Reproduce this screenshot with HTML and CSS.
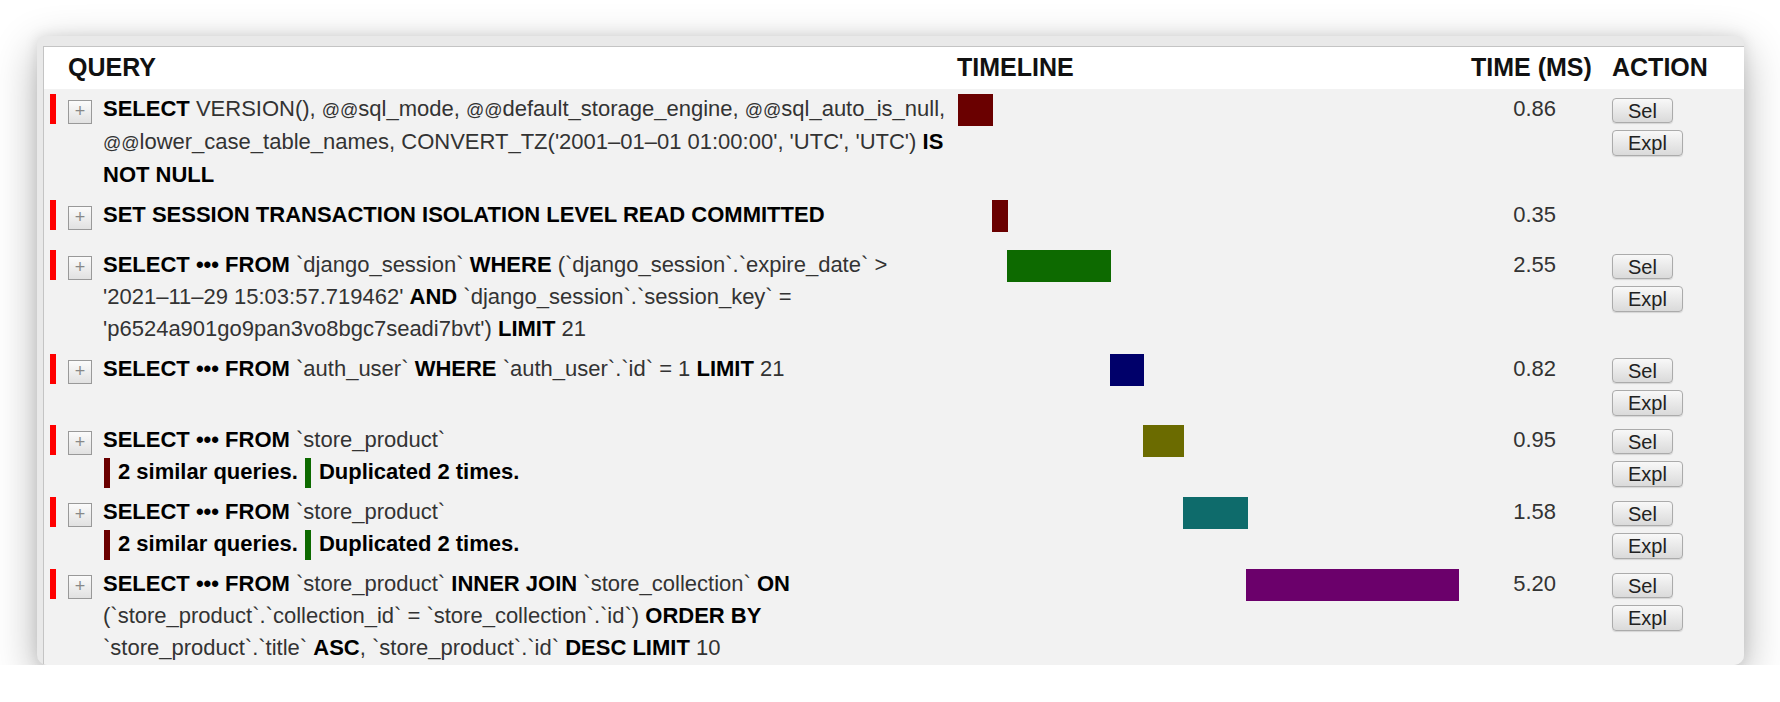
FILE: index.html
```html
<!DOCTYPE html>
<html lang="en">
<head>
<meta charset="utf-8">
<title>SQL queries</title>
<link rel="stylesheet" href="styles.css">
</head>
<body>
<div class="window">
  <div class="panel">
    <div class="row head">
      <div class="cell"></div>
      <div class="cell h-query">QUERY</div>
      <div class="cell h-timeline">TIMELINE</div>
      <div class="cell h-time">TIME (MS)</div>
      <div class="cell h-action">ACTION</div>
    </div>

    <div class="row">
      <div class="cell mark"><span class="marker"></span></div>
      <div class="cell toggle"><span class="toggle-box">+</span></div>
      <div class="cell query"><strong>SELECT</strong> VERSION(), <span class="at">@@</span>sql_mode, <span class="at">@@</span>default_storage_engine, <span class="at">@@</span>sql_auto_is_null, <span class="at">@@</span>lower_case_table_names, CONVERT_TZ(<span class="nowrap">'2001–01–01 01:00:00'</span>, 'UTC', 'UTC') <strong>IS NOT NULL</strong></div>
      <div class="cell timeline"><div class="track"><span class="bar c-red" style="left:0%;width:6.99%"></span></div></div>
      <div class="cell time">0.86</div>
      <div class="cell action"><button class="btn">Sel</button><button class="btn">Expl</button></div>
    </div>

    <div class="row">
      <div class="cell mark"><span class="marker"></span></div>
      <div class="cell toggle"><span class="toggle-box">+</span></div>
      <div class="cell query"><strong>SET SESSION TRANSACTION ISOLATION LEVEL READ COMMITTED</strong></div>
      <div class="cell timeline"><div class="track"><span class="bar c-red" style="left:6.79%;width:3.19%"></span></div></div>
      <div class="cell time">0.35</div>
      <div class="cell action action-empty"></div>
    </div>

    <div class="row">
      <div class="cell mark"><span class="marker"></span></div>
      <div class="cell toggle"><span class="toggle-box">+</span></div>
      <div class="cell query"><strong>SELECT ••• FROM</strong> `django_session` <strong>WHERE</strong> (`django_session`.`expire_date` &gt; <span class="nowrap">'2021–11–29 15:03:57.719462'</span> <strong>AND</strong> `django_session`.`session_key` = 'p6524a901go9pan3vo8bgc7seadi7bvt') <strong>LIMIT</strong> 21</div>
      <div class="cell timeline"><div class="track"><span class="bar c-green" style="left:9.78%;width:20.76%"></span></div></div>
      <div class="cell time">2.55</div>
      <div class="cell action"><button class="btn">Sel</button><button class="btn">Expl</button></div>
    </div>

    <div class="row">
      <div class="cell mark"><span class="marker"></span></div>
      <div class="cell toggle"><span class="toggle-box">+</span></div>
      <div class="cell query"><strong>SELECT ••• FROM</strong> `auth_user` <strong>WHERE</strong> `auth_user`.`id` = 1 <strong>LIMIT</strong> 21</div>
      <div class="cell timeline"><div class="track"><span class="bar c-navy" style="left:30.34%;width:6.79%"></span></div></div>
      <div class="cell time">0.82</div>
      <div class="cell action"><button class="btn">Sel</button><button class="btn">Expl</button></div>
    </div>

    <div class="row">
      <div class="cell mark"><span class="marker"></span></div>
      <div class="cell toggle"><span class="toggle-box">+</span></div>
      <div class="cell query"><strong>SELECT ••• FROM</strong> `store_product`
        <div class="dup"><span class="swatch c-red"></span>2 similar queries. <span class="swatch c-green"></span>Duplicated 2 times.</div>
      </div>
      <div class="cell timeline"><div class="track"><span class="bar c-olive" style="left:36.93%;width:8.18%"></span></div></div>
      <div class="cell time">0.95</div>
      <div class="cell action"><button class="btn">Sel</button><button class="btn">Expl</button></div>
    </div>

    <div class="row">
      <div class="cell mark"><span class="marker"></span></div>
      <div class="cell toggle"><span class="toggle-box">+</span></div>
      <div class="cell query"><strong>SELECT ••• FROM</strong> `store_product`
        <div class="dup"><span class="swatch c-red"></span>2 similar queries. <span class="swatch c-green"></span>Duplicated 2 times.</div>
      </div>
      <div class="cell timeline"><div class="track"><span class="bar c-teal" style="left:44.91%;width:12.97%"></span></div></div>
      <div class="cell time">1.58</div>
      <div class="cell action"><button class="btn">Sel</button><button class="btn">Expl</button></div>
    </div>

    <div class="row">
      <div class="cell mark"><span class="marker"></span></div>
      <div class="cell toggle"><span class="toggle-box">+</span></div>
      <div class="cell query"><strong>SELECT ••• FROM</strong> `store_product` <strong>INNER JOIN</strong> `store_collection` <strong>ON</strong> (`store_product`.`collection_id` = `store_collection`.`id`) <strong>ORDER BY</strong> `store_product`.`title` <strong>ASC</strong>, `store_product`.`id` <strong>DESC LIMIT</strong> 10</div>
      <div class="cell timeline"><div class="track"><span class="bar c-purple" style="left:57.49%;width:42.51%"></span></div></div>
      <div class="cell time">5.20</div>
      <div class="cell action"><button class="btn">Sel</button><button class="btn">Expl</button></div>
    </div>
  </div>
</div>
</body>
</html>
```

FILE: styles.css
```css
html, body {
  margin: 0;
  padding: 0;
  background: #ffffff;
}

body {
  font-family: "Liberation Sans", Arial, Helvetica, sans-serif;
  color: #333333;
  overflow: hidden;
}

.window {
  box-sizing: border-box;
  margin: 36px 0 0 37px;
  width: 1707px;
  height: 629px;
  padding: 10px 0 0 6px;
  background: #e9e9e9;
  border-radius: 7px 7px 10px 10px;
  box-shadow: 0 14px 44px rgba(0, 0, 0, 0.3), 0 0 14px rgba(0, 0, 0, 0.1);
  overflow: hidden;
}

.panel {
  box-sizing: border-box;
  height: 100%;
  background: #f2f2f2;
  border-top: 1px solid #c4c4c4;
  border-left: 1px solid #c4c4c4;
  overflow: hidden;
}

.row {
  display: grid;
  grid-template-columns: 20px 35px 854px 514px 141px 136px;
  align-items: start;
  padding: 4px 0;
  font-size: 22px;
  line-height: 32px;
}

.row.head {
  background: #ffffff;
  padding: 0;
  height: 42px;
  align-items: center;
  font-size: 25px;
  font-weight: bold;
  line-height: 40px;
  color: #111111;
}

.cell {
  box-sizing: border-box;
  min-width: 0;
}

.h-query {
  grid-column: 2 / 4;
  padding-left: 4px;
  padding-bottom: 2px;
}

.h-timeline,
.h-time,
.h-action {
  padding-left: 4px;
  padding-bottom: 2px;
}

.mark {
  padding-left: 6px;
}

.marker {
  display: block;
  width: 6px;
  height: 30px;
  margin-top: 1px;
  background: #ff0000;
}

.toggle {
  padding-left: 4px;
}

.toggle-box {
  display: block;
  box-sizing: border-box;
  width: 24px;
  height: 24px;
  margin-top: 7px;
  border: 1px solid #999999;
  background: linear-gradient(#fbfbfb, #e1e1e1);
  color: #888888;
  font-size: 18px;
  line-height: 21px;
  text-align: center;
}

.query {
  padding: 0 1px 0 4px;
}

.query strong,
.dup {
  font-weight: bold;
  color: #000000;
}

.at {
  font-size: 18px;
}

.nowrap {
  white-space: nowrap;
}

.dup {
  display: block;
}

.swatch {
  display: inline-block;
  width: 6px;
  height: 30px;
  margin: 2px 8px 0 1px;
  vertical-align: top;
}

.timeline {
  padding: 0 8px 0 5px;
}

.track {
  position: relative;
  height: 33px;
}

.bar {
  position: absolute;
  top: 1px;
  height: 32px;
}

.c-red { background: #6a0000; }
.c-green { background: #0d6a00; }
.c-navy { background: #00006a; }
.c-olive { background: #6b6b00; }
.c-teal { background: #0e6b6b; }
.c-purple { background: #6b006b; }

.time {
  text-align: right;
  padding-right: 52px;
}

.action {
  display: flex;
  flex-direction: column;
  align-items: flex-start;
  gap: 7px;
  padding: 5px 0 0 4px;
}

.action-empty {
  min-height: 42px;
}

.btn {
  box-sizing: border-box;
  height: 25px;
  padding: 0 15px;
  font-family: "Liberation Sans", Arial, Helvetica, sans-serif;
  font-size: 20px;
  line-height: 22px;
  color: #222222;
  border: 1px solid #ababab;
  border-radius: 4px;
  background: linear-gradient(#f8f8f8, #dadada);
  box-shadow: 0 1px 1px rgba(0, 0, 0, 0.12);
}

.btn + .btn {
  height: 26px;
}
```
